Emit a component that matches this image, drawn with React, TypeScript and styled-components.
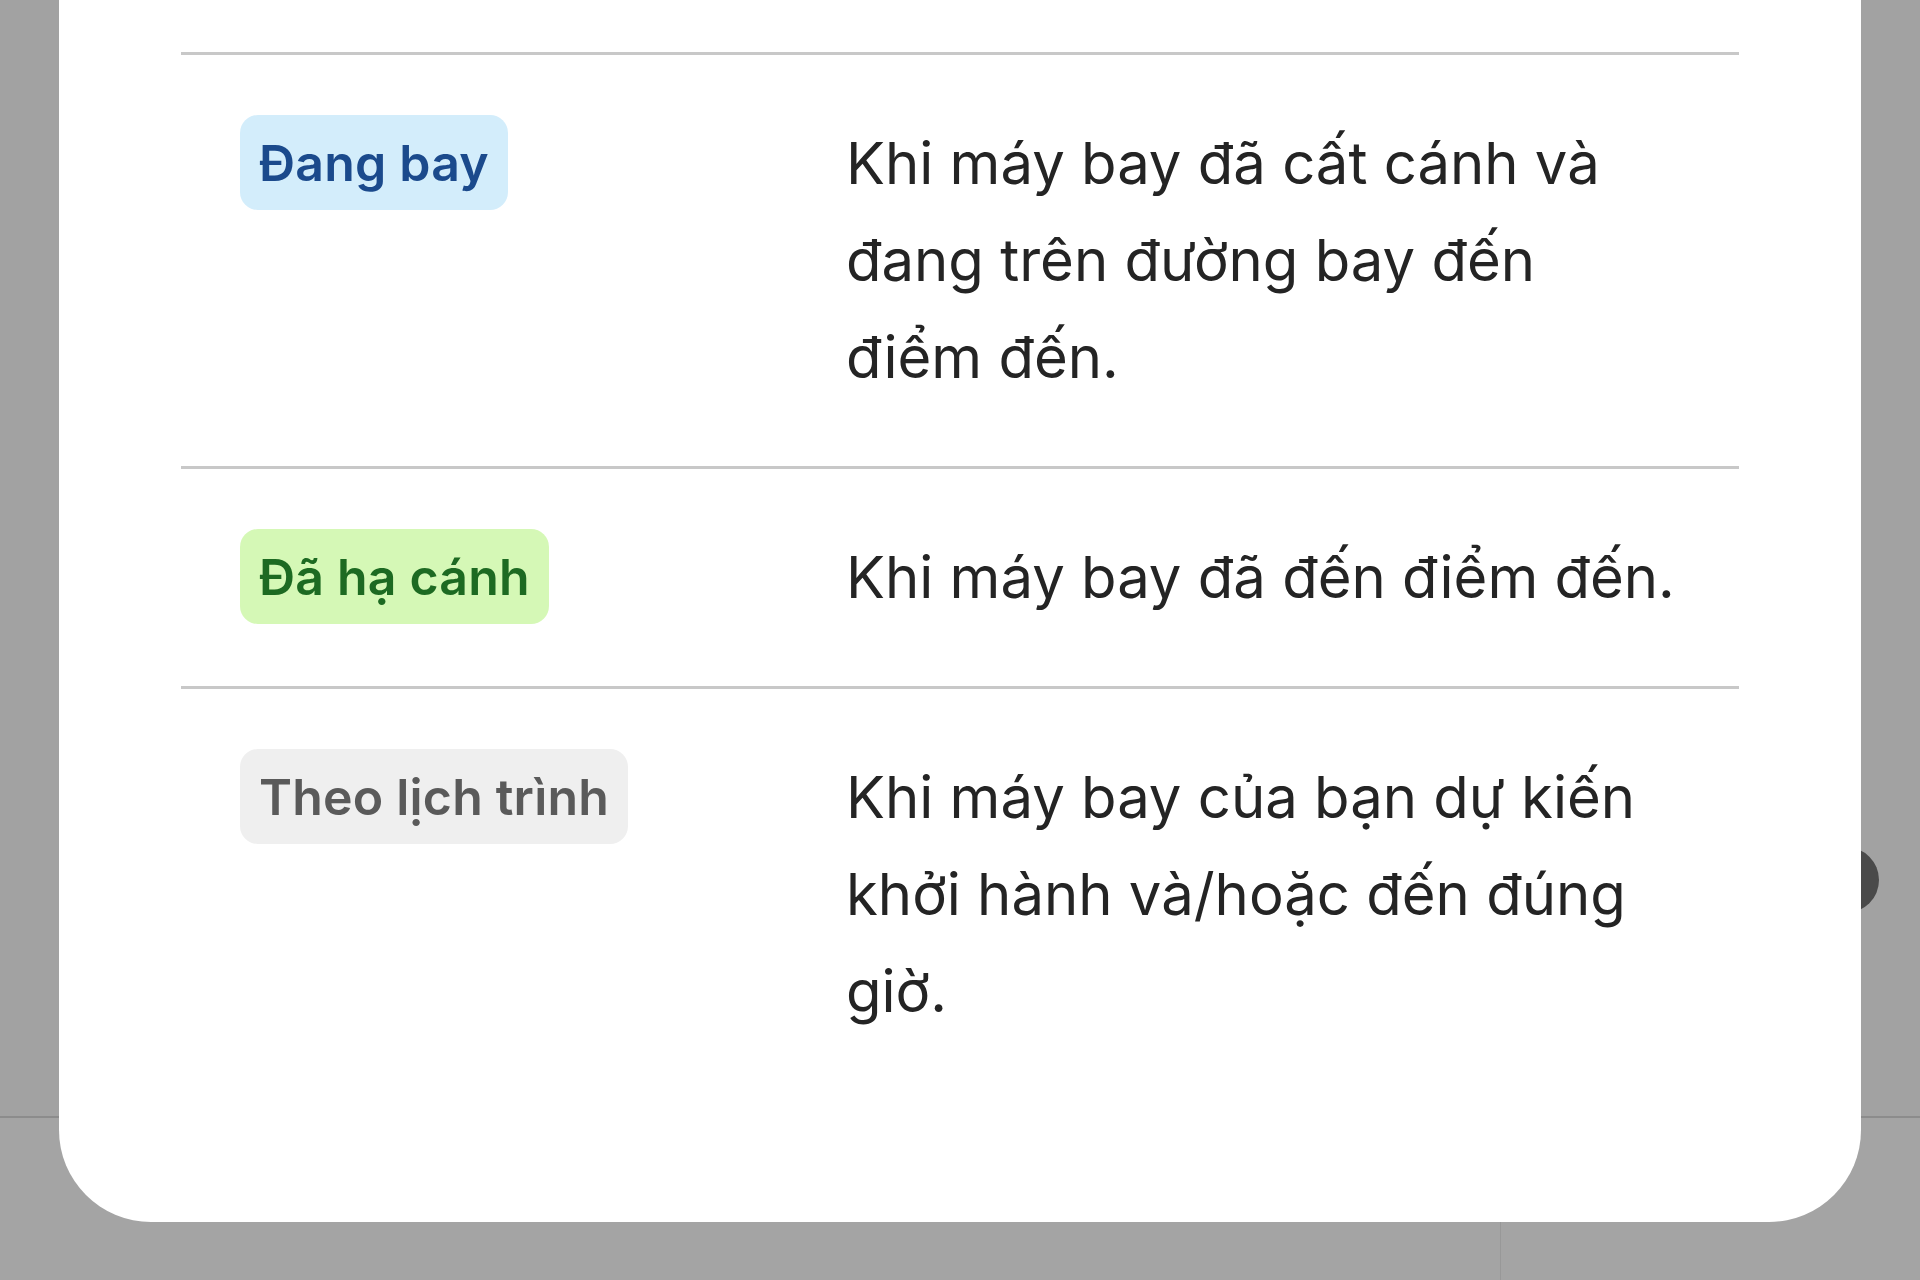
import styled, { createGlobalStyle } from "styled-components";

type Tone = "blue" | "green" | "grey";

const tones: Record<Tone, { bg: string; fg: string }> = {
  blue: { bg: "#d3edfb", fg: "#1b4a8c" },
  green: { bg: "#d5f8b6", fg: "#1d6a22" },
  grey: { bg: "#efefef", fg: "#5a5a5a" },
};

const statuses: { label: string; tone: Tone; text: string }[] = [
  {
    label: "Đang bay",
    tone: "blue",
    text: "Khi máy bay đã cất cánh và đang trên đường bay đến điểm đến.",
  },
  {
    label: "Đã hạ cánh",
    tone: "green",
    text: "Khi máy bay đã đến điểm đến.",
  },
  {
    label: "Theo lịch trình",
    tone: "grey",
    text: "Khi máy bay của bạn dự kiến khởi hành và/hoặc đến đúng giờ.",
  },
];

const App = () => {
  return (
    <>
      <GlobalStyle />
      <Backdrop>
        <TabBar>
          <TabCell />
          <TabCell $divided />
        </TabBar>
        <Handle />
        <Sheet>
          <List>
            {statuses.map((s) => (
              <Row key={s.label}>
                <div>
                  <Badge $tone={s.tone}>{s.label}</Badge>
                </div>
                <Desc>{s.text}</Desc>
              </Row>
            ))}
          </List>
        </Sheet>
      </Backdrop>
    </>
  );
};

export default App;

const GlobalStyle = createGlobalStyle`
  html, body {
    margin: 0;
    padding: 0;
    background: #a2a2a2;
  }
  body {
    font-family: Inter, "Noto Sans", "Liberation Sans", sans-serif;
    overflow: hidden;
  }
`;

const Backdrop = styled.div`
  position: relative;
  width: 1920px;
  height: 1280px;
  display: flex;
  flex-direction: column;
  justify-content: flex-end;
  background: #a2a2a2;
  overflow: hidden;
`;

const TabBar = styled.div`
  height: 162px;
  display: grid;
  grid-template-columns: 1500px 1fr;
  border-top: 2px solid #8c8c8c;
  background: #a4a4a4;
`;

const TabCell = styled.div<{ $divided?: boolean }>`
  border-left: ${(p) => (p.$divided ? "1px solid #989898" : "none")};
`;

// floating button of the page below, mostly hidden by the sheet
const Handle = styled.div`
  position: absolute;
  left: 1813px;
  top: 847px;
  width: 66px;
  height: 66px;
  border-radius: 50%;
  background: #4a4a4a;
`;

const Sheet = styled.div`
  position: absolute;
  left: 59px;
  right: 59px;
  top: 0;
  height: 1222px;
  box-sizing: border-box;
  background: #ffffff;
  border-radius: 0 0 92px 92px;
  padding: 52px 122px 0;
`;

const List = styled.div`
  display: flex;
  flex-direction: column;
`;

const Row = styled.div`
  display: grid;
  grid-template-columns: 606px 1fr;
  align-items: start;
  padding: 60px 59px;
  border-top: 3px solid #c8c8c8;
`;

const Badge = styled.span<{ $tone: Tone }>`
  display: inline-flex;
  align-items: center;
  height: 95px;
  padding: 0 19px;
  border-radius: 18px;
  background: ${(p) => tones[p.$tone].bg};
  color: ${(p) => tones[p.$tone].fg};
  font-size: 50px;
  font-weight: 600;
  letter-spacing: 0.2px;
`;

const Desc = styled.p`
  margin: 0;
  font-size: 58px;
  line-height: 97px;
  color: #242424;
`;
